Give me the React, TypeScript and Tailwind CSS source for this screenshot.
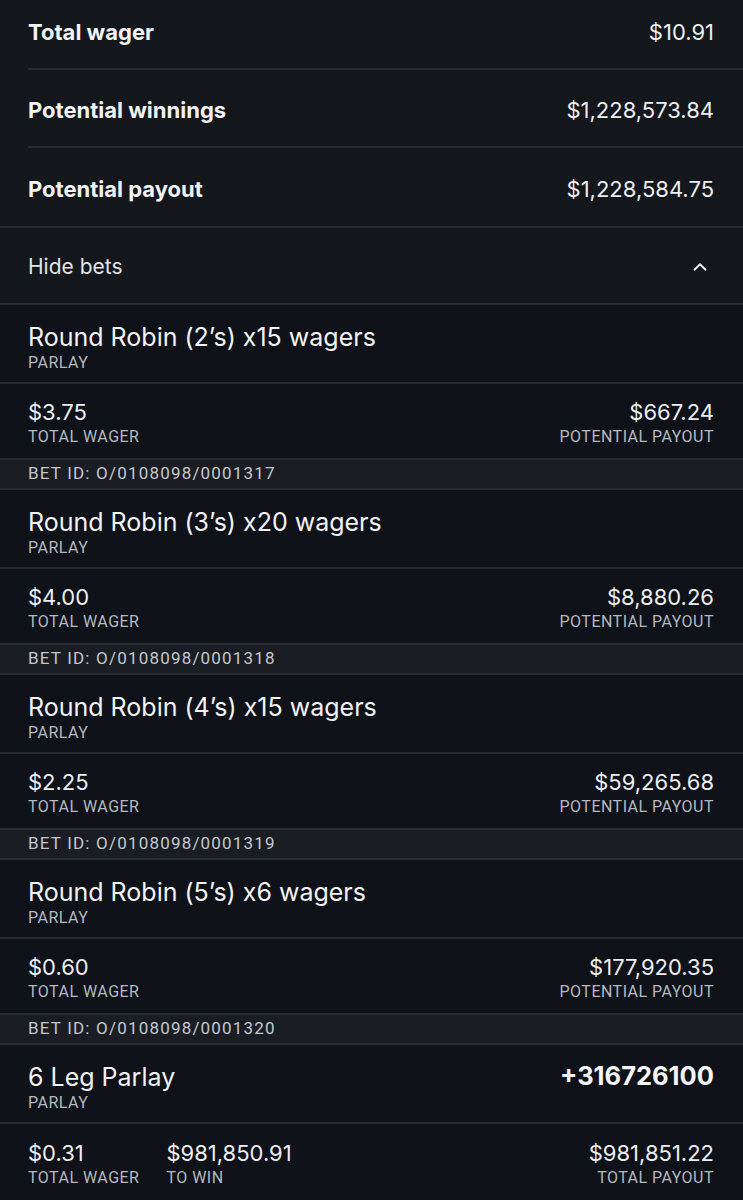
import { ChevronUp } from 'lucide-react';

type Bet = {
  title: string;
  wager: string;
  payout: string;
  betId: string;
};

const bets: Bet[] = [
  { title: 'Round Robin (2’s) x15 wagers', wager: '$3.75', payout: '$667.24', betId: 'O/0108098/0001317' },
  { title: 'Round Robin (3’s) x20 wagers', wager: '$4.00', payout: '$8,880.26', betId: 'O/0108098/0001318' },
  { title: 'Round Robin (4’s) x15 wagers', wager: '$2.25', payout: '$59,265.68', betId: 'O/0108098/0001319' },
  { title: 'Round Robin (5’s) x6 wagers', wager: '$0.60', payout: '$177,920.35', betId: 'O/0108098/0001320' },
];

const label = "font-['Roboto',sans-serif] text-[16px] leading-[20px] tracking-[0.03em] text-[#b4b9c0]";

function SummaryRow({ name, value, line = true }: { name: string; value: string; line?: boolean }) {
  return (
    <div className={`flex h-[78px] items-center justify-between pr-[29px] pt-[4px] ${line ? 'border-b-2 border-[#272c33]' : ''}`}>
      <span className="text-[22px] font-bold text-[#f2f3f5]">{name}</span>
      <span className="text-[22px] text-[#eceef1]">{value}</span>
    </div>
  );
}

function BetBlock({ bet }: { bet: Bet }) {
  return (
    <div>
      <div className="flex h-[79px] flex-col justify-center border-b-2 border-[#272c33] px-[28px] pt-[8px]">
        <span className="text-[25px] leading-[30px] text-[#f2f3f5]">{bet.title}</span>
        <span className={`${label} mt-[1px]`}>PARLAY</span>
      </div>
      <div className="flex h-[76px] items-center justify-between border-b-2 border-[#272c33] px-[28px] pr-[29px] pt-[2px]">
        <div className="flex flex-col">
          <span className="text-[22px] leading-[28px] text-[#eceef1]">{bet.wager}</span>
          <span className={`${label} mt-[1px]`}>TOTAL WAGER</span>
        </div>
        <div className="flex flex-col items-end">
          <span className="text-[22px] leading-[28px] text-[#eceef1]">{bet.payout}</span>
          <span className={`${label} mt-[1px]`}>POTENTIAL PAYOUT</span>
        </div>
      </div>
      <div className="flex h-[30px] items-center border-b-2 border-[#272c33] bg-[#1a1d23] px-[28px]">
        <span className="font-['Roboto',sans-serif] text-[17px] tracking-[0.07em] text-[#c4c8ce]">BET ID: {bet.betId}</span>
      </div>
    </div>
  );
}

export default function App() {
  return (
    <div className="h-[1200px] w-[743px] overflow-hidden bg-[#0f1218] font-['Inter',sans-serif]">
      <div className="-mt-[8px] bg-[#14171c]">
        <div className="pl-[28px]">
          <SummaryRow name="Total wager" value="$10.91" />
          <SummaryRow name="Potential winnings" value="$1,228,573.84" />
          <SummaryRow name="Potential payout" value="$1,228,584.75" line={false} />
        </div>
        <div className="flex h-[79px] items-center justify-between border-y-2 border-[#272c33] px-[28px] pr-[32px] pt-[2px]">
          <span className="text-[21px] text-[#e2e4e8]">Hide bets</span>
          <ChevronUp size={22} strokeWidth={2} className="text-[#eceef1]" />
        </div>
      </div>

      {bets.map((bet) => (
        <BetBlock key={bet.betId} bet={bet} />
      ))}

      <div>
        <div className="flex h-[79px] items-center justify-between border-b-2 border-[#272c33] px-[28px] pr-[29px] pt-[8px]">
          <div className="flex flex-col">
            <span className="text-[25px] leading-[30px] text-[#f2f3f5]">6 Leg Parlay</span>
            <span className={`${label} mt-[1px]`}>PARLAY</span>
          </div>
          <span className="-mt-[22px] text-[25.5px] font-bold text-[#f4f5f7]">+316726100</span>
        </div>
        <div className="flex h-[76px] items-center justify-between px-[28px] pr-[29px] pt-[2px]">
          <div className="flex gap-[27px]">
            <div className="flex flex-col">
              <span className="text-[22px] leading-[28px] text-[#eceef1]">$0.31</span>
              <span className={`${label} mt-[1px]`}>TOTAL WAGER</span>
            </div>
            <div className="flex flex-col">
              <span className="text-[22px] leading-[28px] text-[#eceef1]">$981,850.91</span>
              <span className={`${label} mt-[1px]`}>TO WIN</span>
            </div>
          </div>
          <div className="flex flex-col items-end">
            <span className="text-[22px] leading-[28px] text-[#eceef1]">$981,851.22</span>
            <span className={`${label} mt-[1px]`}>TOTAL PAYOUT</span>
          </div>
        </div>
      </div>
    </div>
  );
}
